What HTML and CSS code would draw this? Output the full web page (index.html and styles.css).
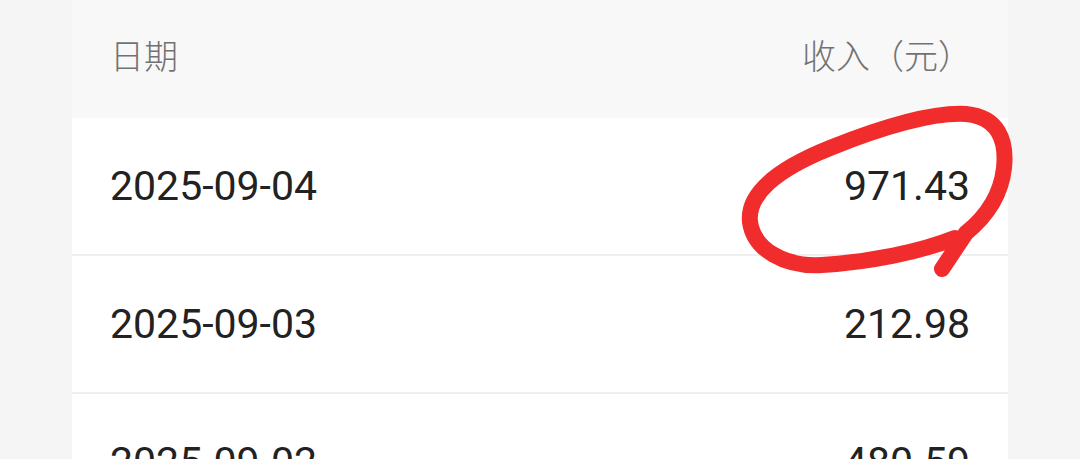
FILE: index.html
```html
<!DOCTYPE html>
<html lang="zh-CN">
<head>
    <meta charset="UTF-8">
    <meta name="viewport" content="width=device-width, initial-scale=1.0">
    <title>收入明细</title>
    <link rel="stylesheet" href="styles.css">
</head>
<body>
    <div class="table">
        <div class="head">
            <span>日期</span>
            <span>收入（元）</span>
        </div>
        <div class="row">
            <span>2025-09-04</span>
            <span>971.43</span>
        </div>
        <div class="row">
            <span>2025-09-03</span>
            <span>212.98</span>
        </div>
        <div class="row">
            <span>2025-09-02</span>
            <span>480.59</span>
        </div>

        <!-- 手绘圈注 -->
        <svg class="mark" width="1080" height="459" viewBox="0 0 1080 459">
            <path d="M 955 238
                     C 920 252, 870 262, 822 265
                     C 785 267, 754 250, 750 222
                     C 747 195, 775 170, 830 148
                     C 880 128, 930 112, 966 114
                     C 998 117, 1007 140, 1004 168
                     C 1001 195, 987 216, 966 233
                     L 942 269"
                  fill="none" stroke="#f12c2c" stroke-width="16" stroke-linecap="round" stroke-linejoin="round"/>
        </svg>
    </div>
</body>
</html>
```

FILE: styles.css
```css
* {
    margin: 0;
    padding: 0;
    box-sizing: border-box;
}

body {
    background-color: #f5f5f5;
    height: 459px;
    overflow: hidden;
}

.table {
    margin: 0 72px;
    background-color: #fff;
    min-height: 459px;
}

.head {
    height: 118px;
    padding: 0 36px 10px 38px;
    display: flex;
    align-items: center;
    justify-content: space-between;
    background-color: #f8f8f8;
    color: #727272;
    font-family: "Noto Sans CJK SC", sans-serif;
    font-size: 34px;
    font-weight: 300;
}

.row {
    height: 138px;
    padding: 0 38px;
    display: flex;
    align-items: center;
    justify-content: space-between;
    border-bottom: 2px solid #efefef;
    color: #222;
    font-family: Roboto, "Noto Sans", sans-serif;
    font-size: 41px;
}

.mark {
    position: absolute;
    top: 0;
    left: 0;
    pointer-events: none;
}
```
